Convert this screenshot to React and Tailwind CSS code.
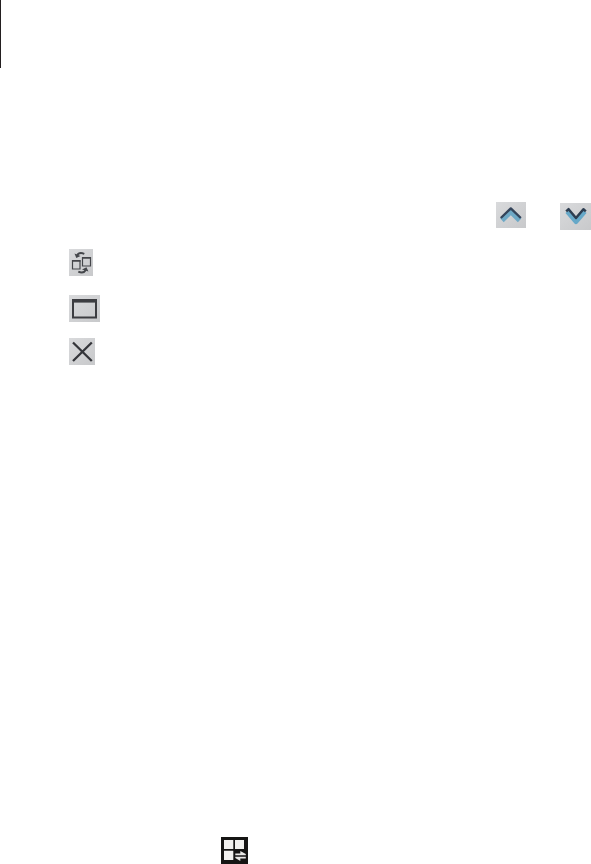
import React from "react";

const tile = "block shrink-0 bg-gradient-to-br from-[#d9dadc] to-[#c8c9cb]";

function ArrowUp() {
  return (
    <svg viewBox="0 0 30 26" className={`${tile} w-[30px] h-[26px]`} fill="none" strokeLinejoin="round">
      <path d="M6 18.4 L14.8 9.8 L23.6 18.4" stroke="#6fa9c6" strokeWidth="5" />
      <path d="M4.8 16 L14.8 6.4 L24.8 16" stroke="#34445a" strokeWidth="2.4" />
    </svg>
  );
}

function ArrowDown() {
  return (
    <svg viewBox="0 0 31 27" className={`${tile} w-[31px] h-[27px]`} fill="none" strokeLinejoin="round">
      <path d="M7.2 8.5 L16 18.8 L24.8 8.5" stroke="#66a8c8" strokeWidth="4.6" />
      <path d="M6.2 8.4 L8.6 6.2 L16 15 L23.4 6.2 L25.8 8.4" stroke="#2d3d50" strokeWidth="2.5" />
    </svg>
  );
}

function SwapWindows() {
  return (
    <svg viewBox="0 0 24 27" className={`${tile} w-[24px] h-[27px]`} fill="none" stroke="#44464a">
      <path d="M3.5 11.5 H11 V20 H3.5 Z M13.5 8.5 H21.5 V17 H13.5 Z" strokeWidth="1.2" />
      <path d="M3 12 H11.5 M13 9 H22" strokeWidth="1.5" />
      <path d="M8 6.5 Q10 2.6 15.3 4.8" strokeWidth="2" />
      <path d="M5.5 4.5 L11.5 7 L7.3 9 Z" fill="#44464a" stroke="none" />
      <path d="M9.3 22.6 Q14.5 25 16.8 21" strokeWidth="2" />
      <path d="M13 20.6 L17.5 18.2 L19.4 22.6 Z" fill="#44464a" stroke="none" />
    </svg>
  );
}

function Maximize() {
  return (
    <svg viewBox="0 0 31 27" className={`${tile} w-[31px] h-[27px]`} fill="none" stroke="#3c3d41">
      <path d="M4 5 H27 V22.5 H4 Z" strokeWidth="2" />
      <path d="M3 5.8 H28" strokeWidth="3.6" />
    </svg>
  );
}

function Close() {
  return (
    <svg viewBox="0 0 26 27" className={`${tile} w-[26px] h-[27px]`} fill="none">
      <path d="M4 4.5 L22.8 23 M22.8 4.5 L4 23" stroke="#34353a" strokeWidth="2.3" />
    </svg>
  );
}

function SplitScreen() {
  return (
    <svg viewBox="0 0 27 27" className="block w-[27px] h-[27px] bg-[#161514]">
      <path d="M3 3 H12.3 V12 H3 Z M14 3 H23 V12 H14 Z M3 13.7 H12.3 V23 H3 Z" fill="#f2f1ef" />
      <path
        d="M14.3 16.4 H19.3 V14 L24.8 17 V18.2 H14.3 Z M24.8 19.8 H14.3 V21 L19.3 24 V21.6 H24.8 Z"
        fill="#e9e8e6"
      />
    </svg>
  );
}

export default function App() {
  return (
    <div className="w-[591px] h-[864px] bg-white flex flex-col overflow-hidden">
      <div className="w-px h-[68px] shrink-0 bg-[#231f20]" />

      {/* Scroll arrows */}
      <div className="mt-[134px] flex items-start justify-end gap-[34px]">
        <ArrowUp />
        <div className="pt-px">
          <ArrowDown />
        </div>
      </div>

      {/* Window controls */}
      <div className="mt-[19px] pl-[69px] flex flex-col items-start">
        <SwapWindows />
        <div className="mt-[19px]">
          <Maximize />
        </div>
        <div className="mt-4">
          <Close />
        </div>
      </div>

      <div className="mt-auto pl-[221px]">
        <SplitScreen />
      </div>
    </div>
  );
}
